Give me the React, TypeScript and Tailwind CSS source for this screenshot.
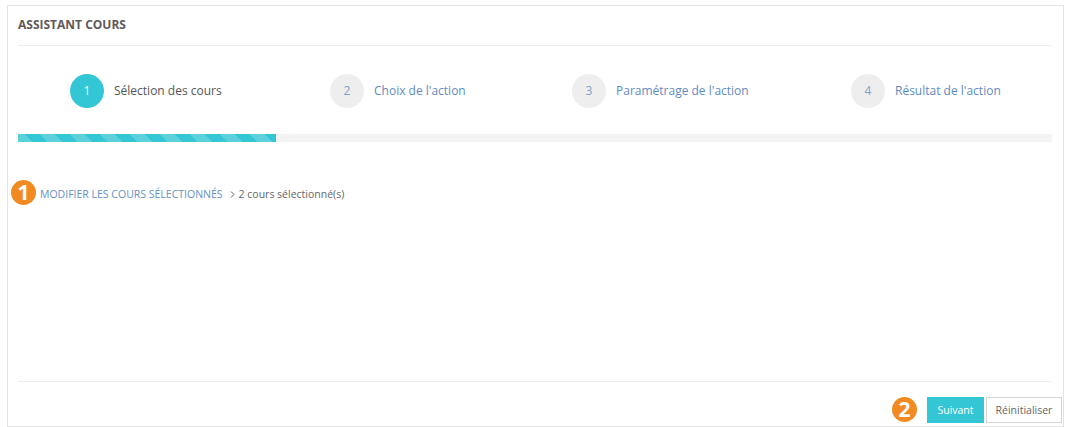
const FONT = "font-['Open_Sans','Noto_Sans',sans-serif]";

function Step({ n, label, active, cls }: { n: number; label: string; active?: boolean; cls: string }) {
  return (
    <div className={`flex items-center ${cls}`}>
      <div
        className={`w-[34px] h-[34px] rounded-full flex items-center justify-center text-[12px] ${
          active ? "bg-[#33c6d4] text-white" : "bg-[#eeeeee] text-[#7d9fcb]"
        }`}
      >
        {n}
      </div>
      <span className={`ml-[10px] text-[12px] leading-[18px] whitespace-nowrap ${active ? "text-[#555555]" : "text-[#5f8bc0]"}`}>
        {label}
      </span>
    </div>
  );
}

function Badge({ n }: { n: number }) {
  return (
    <div className="w-[25px] h-[25px] rounded-full bg-[#f08a21] text-white flex items-center justify-center text-[21px] font-bold leading-none shrink-0">
      {n}
    </div>
  );
}

export default function App() {
  return (
    <div className={`${FONT} w-[1070px] h-[427px] bg-white overflow-hidden pl-[7px] pt-[5px] pr-[6px]`}>
      <div className="h-[422px] border border-[#e3e3e3] flex flex-col">
        <div className="ml-[10px] mr-[11px] h-[40px] border-b border-[#eeeeee] flex items-center">
          <span className="text-[12px] font-bold text-[#5f5a5a] leading-none mt-[-1px]">ASSISTANT COURS</span>
        </div>
        <div className="mx-[10px] h-[88px] flex items-center pt-[1px]">
          <Step n={1} label="Sélection des cours" active cls="w-[260px] pl-[52px]" />
          <Step n={2} label="Choix de l'action" cls="w-[294px] pl-[52px]" />
          <Step n={3} label="Paramétrage de l'action" cls="w-[279px]" />
          <Step n={4} label="Résultat de l'action" cls="" />
        </div>
        <div className="ml-[10px] mr-[11px] h-[8px] bg-[#f3f3f3]">
          <div className="h-full w-[258px] bg-[#33c6d4] bg-[repeating-linear-gradient(45deg,rgba(255,255,255,.2)_0,rgba(255,255,255,.2)_10.6px,transparent_10.6px,transparent_21.2px)]" />
        </div>
        <div className="mt-[38px] ml-[3px] flex items-center h-[25px] text-[10.5px] leading-none">
          <Badge n={1} />
          <span className="ml-[4px] mt-[3px] text-[#6590c4]">MODIFIER LES COURS SÉLECTIONNÉS</span>
          <svg className="ml-[7px] mt-[3px]" width="5" height="7" viewBox="0 0 5 7" fill="none" stroke="#666666" strokeWidth="1">
            <path d="M1 0.5 L4 3.5 L1 6.5" />
          </svg>
          <span className="ml-[4px] mt-[3px] text-[#666666]">2 cours sélectionné(s)</span>
        </div>
        <div className="flex-1" />
        <div className="ml-[10px] mr-[11px] border-b border-[#eeeeee]" />
        <div className="h-[44px] pr-[1px] pb-[3px] flex items-end justify-end">
          <div className="mb-[1px]">
            <Badge n={2} />
          </div>
          <button className="ml-[10px] w-[57px] h-[26px] bg-[#33c6d4] text-white text-[10.5px] leading-none">Suivant</button>
          <button className="ml-[2px] w-[76px] h-[26px] bg-white border border-[#d5d5d5] text-[#666666] text-[10.5px] leading-none">Réinitialiser</button>
        </div>
      </div>
    </div>
  );
}
